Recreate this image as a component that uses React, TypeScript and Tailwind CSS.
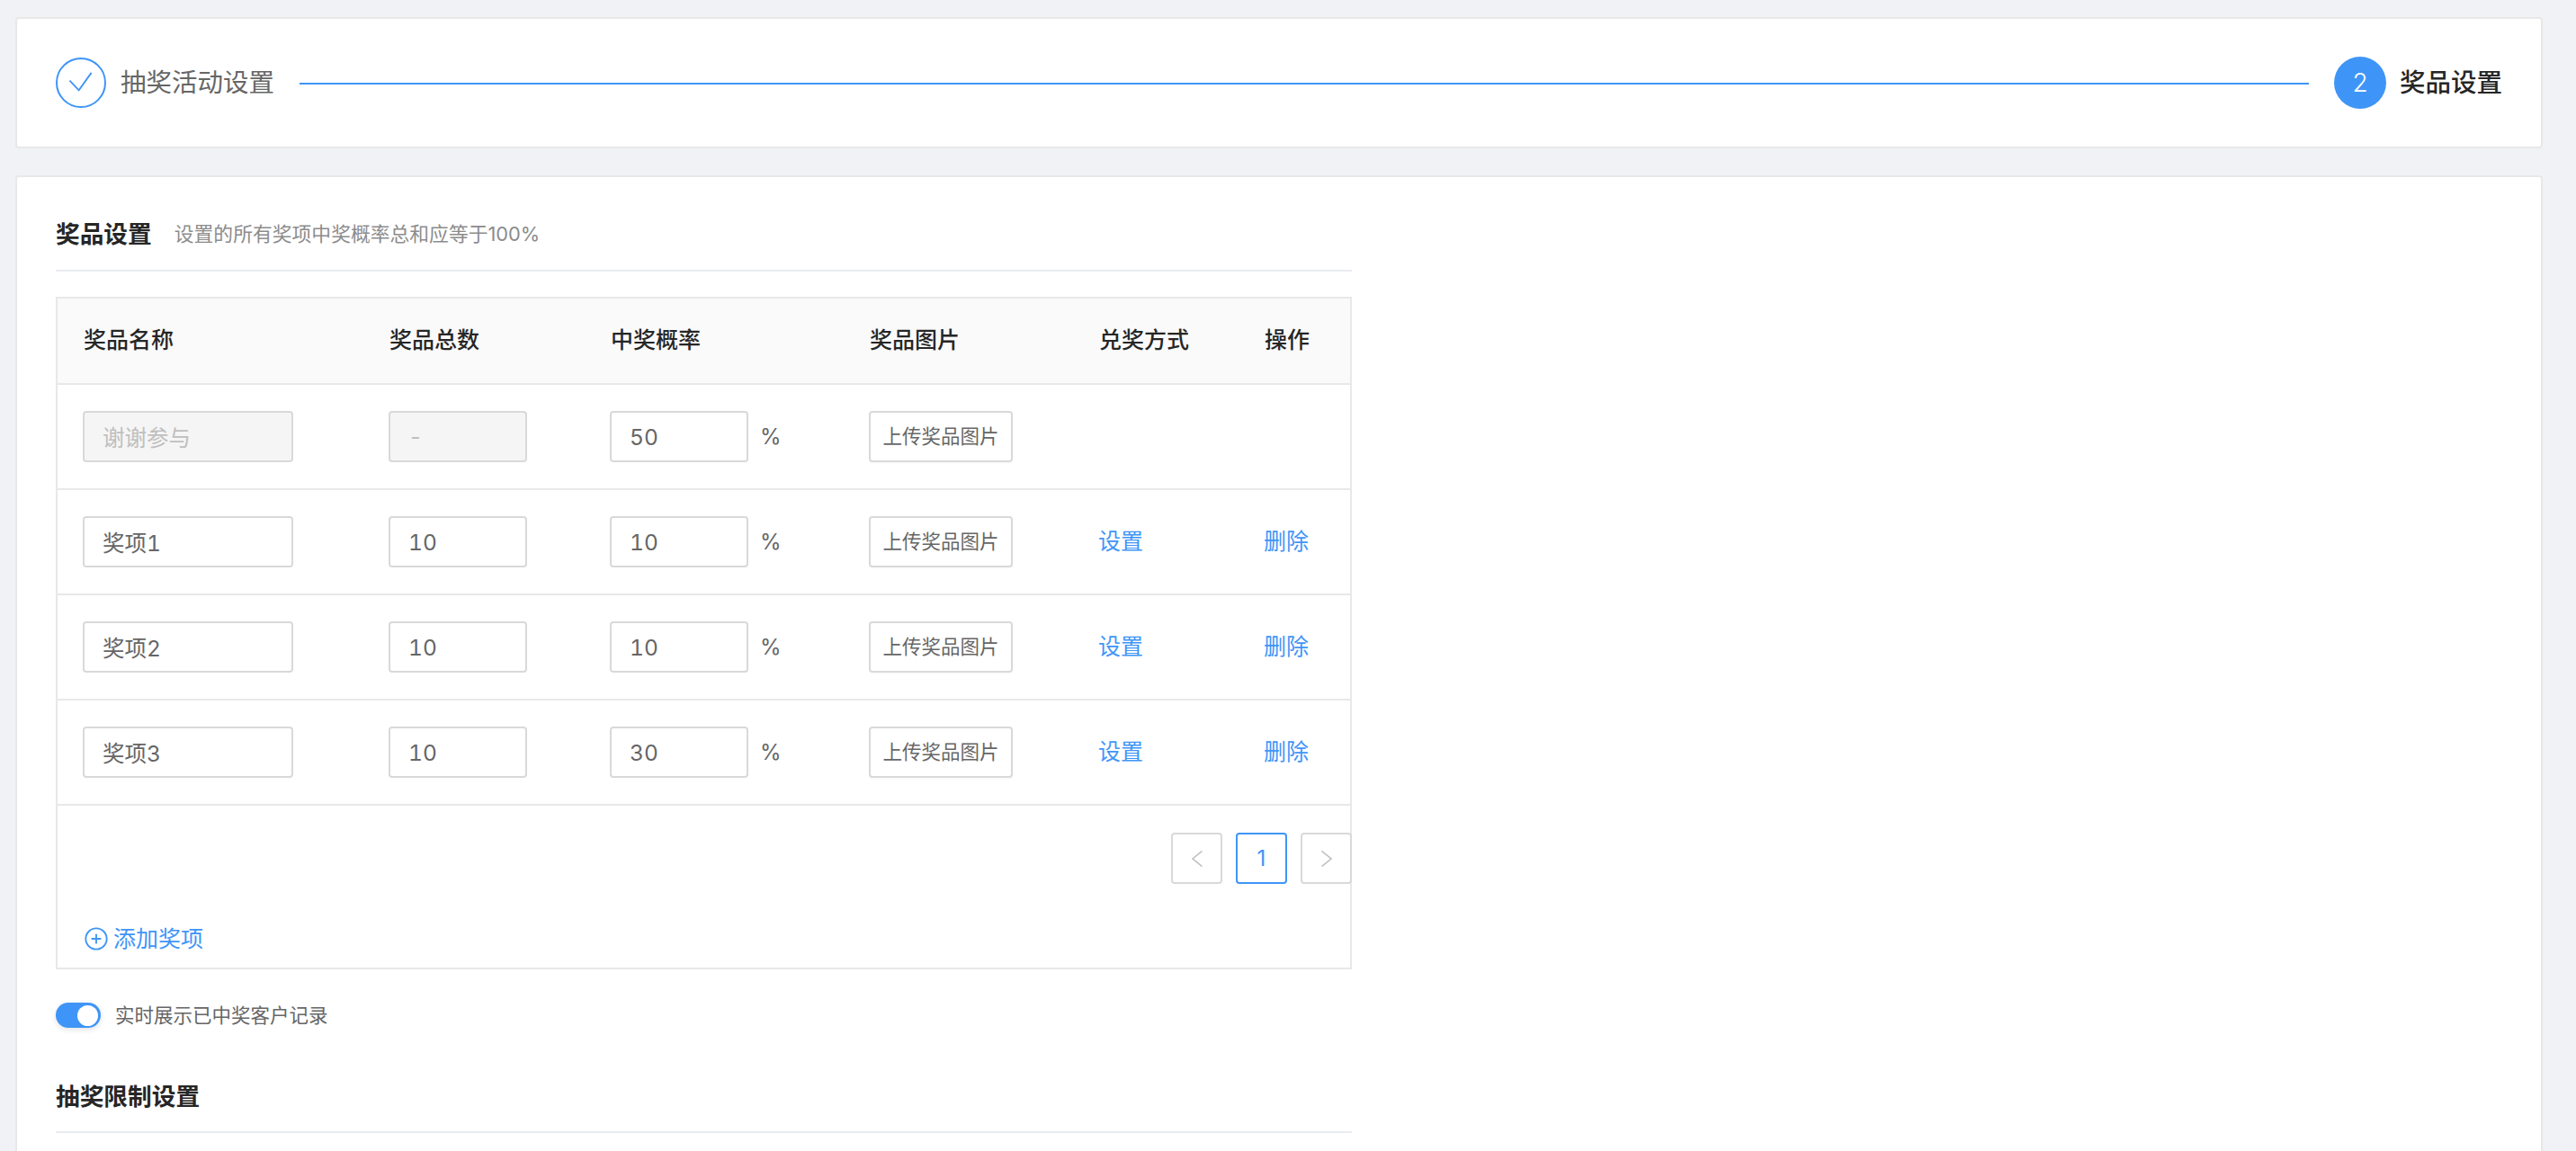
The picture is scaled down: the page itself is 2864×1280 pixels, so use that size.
import { CirclePlus } from "lucide-react";

const cols = ["w-[340px]", "w-[246px]", "w-[288px]", "w-[255px]", "w-[184px]", "flex-1"];

const rows = [
  { name: "谢谢参与", total: "-", rate: "50", locked: true },
  { name: "奖项1", total: "10", rate: "10", locked: false },
  { name: "奖项2", total: "10", rate: "10", locked: false },
  { name: "奖项3", total: "10", rate: "30", locked: false },
];

const headers = ["奖品名称", "奖品总数", "中奖概率", "奖品图片", "兑奖方式", "操作"];

function Field({ value, width, locked }: { value: string; width: string; locked?: boolean }) {
  return (
    <input
      readOnly
      value={value}
      className={`${width} h-[57px] rounded border-2 border-[#d9d9d9] px-[20px] text-[24.5px] tabular-nums outline-none ${
        locked ? "bg-[#f5f5f5] text-[#bfbfbf]" : "bg-white text-[#666666]"
      }`}
    />
  );
}

function PrizeRow({ name, total, rate, locked }: (typeof rows)[number]) {
  return (
    <div className="flex h-[117px] items-center border-b-2 border-[#e8e8e8] pl-[28px]">
      <div className={cols[0]}>
        <Field value={name} width="w-[234px]" locked={locked} />
      </div>
      <div className={cols[1]}>
        <Field value={total} width="w-[154px]" locked={locked} />
      </div>
      <div className={`${cols[2]} flex items-center`}>
        <Field value={rate} width="w-[154px]" />
        <span className="ml-[13px] text-[24px] text-[#666666]">%</span>
      </div>
      <div className={cols[3]}>
        <button className="h-[57px] w-[160px] rounded border-2 border-[#d9d9d9] bg-white text-center text-[21.5px] text-[#666666] shadow-[0_2px_0_rgba(0,0,0,0.015)]">
          上传奖品图片
        </button>
      </div>
      {!locked && (
        <>
          <a className={`${cols[4]} text-[25px] text-[#3f95f7]`}>设置</a>
          <a className={`${cols[5]} text-[25px] text-[#3f95f7]`}>删除</a>
        </>
      )}
    </div>
  );
}

function PageButton({ children, active }: { children: React.ReactNode; active?: boolean }) {
  return (
    <button
      className={`flex h-[57px] w-[57px] items-center justify-center rounded border-2 bg-white ${
        active ? "border-[#3f95f7] text-[#3f95f7]" : "border-[#d9d9d9] text-[#bfbfbf]"
      }`}
    >
      {children}
    </button>
  );
}

export default function App() {
  return (
    <div
      className="flex h-screen flex-col gap-[30px] overflow-hidden bg-[#f0f2f5] pt-[19px] pr-[37px] pl-[17px]"
      style={{ fontFamily: 'Inter, "Noto Sans CJK SC", sans-serif' }}
    >
      {/* steps */}
      <div className="flex h-[146px] shrink-0 items-center rounded border-2 border-[#e8e8e8] bg-white pr-[43px] pl-[43px]">
        <div className="flex h-[56px] w-[56px] items-center justify-center rounded-full border-2 border-[#3f95f7]">
          <svg viewBox="0 0 56 56" className="h-[56px] w-[56px]" fill="none" stroke="#3f95f7" strokeWidth="2">
            <path d="M14.5 25.5 L25.5 37 L40.5 16" />
          </svg>
        </div>
        <span className="ml-4 text-[28.5px] text-[#666666]">抽奖活动设置</span>
        <div className="mx-[28px] mt-[1px] h-[2px] flex-1 bg-[#3f95f7]" />
        <div className="flex h-[58px] w-[58px] items-center justify-center rounded-full bg-[#3f95f7] text-[28px] font-light text-white">
          2
        </div>
        <span className="ml-[15px] text-[28.5px] font-medium text-[#262626]">奖品设置</span>
      </div>

      {/* prize settings */}
      <div className="shrink-0 rounded border-2 border-[#e8e8e8] bg-white pt-[44px] pb-[200px] pl-[43px]">
        <div className="w-[1441px]">
          <div className="flex h-[61px] items-start border-b-2 border-[#e8ecf1]">
            <h2 className="text-[26.7px] leading-[38px] font-semibold text-[#262626]">奖品设置</h2>
            <span className="ml-[25px] text-[21.8px] leading-[38px] text-[#8c8c8c]">
              设置的所有奖项中奖概率总和应等于100%
            </span>
          </div>

          <div className="mt-[28px] border-r-2 border-b-2 border-l-2 border-[#e8e8e8]">
            <div className="flex h-[98px] items-center border-t-2 border-b-2 border-[#e8e8e8] bg-[#fafafa] pl-[29px]">
              {headers.map((h, i) => (
                <div key={h} className={`${cols[i]} text-[25px] font-medium text-[#262626]`}>
                  {h}
                </div>
              ))}
            </div>
            {rows.map((r) => (
              <PrizeRow key={r.name} {...r} />
            ))}
            <div className="-mr-[2px] flex justify-end gap-[15px] pt-[30px]">
              <PageButton>
                <svg viewBox="0 0 12 18" className="h-[18px] w-[12px]" fill="none" stroke="currentColor" strokeWidth="1.6">
                  <path d="M11.5 0.5 L1 9 L11.5 17.5" />
                </svg>
              </PageButton>
              <PageButton active>
                <span className="text-[24px]">1</span>
              </PageButton>
              <PageButton>
                <svg viewBox="0 0 12 18" className="h-[18px] w-[12px]" fill="none" stroke="currentColor" strokeWidth="1.6">
                  <path d="M0.5 0.5 L11 9 L0.5 17.5" />
                </svg>
              </PageButton>
            </div>
            <div className="flex h-[93px] items-end gap-[5px] pb-[18px] pl-[29px] text-[#3f95f7]">
              <CirclePlus className="h-[28px] w-[28px]" strokeWidth={1.6} />
              <span className="text-[25px] leading-[28px]">添加奖项</span>
            </div>
          </div>

          <div className="mt-[35px] flex items-center">
            <div className="flex h-[28px] w-[50px] items-center justify-end rounded-full bg-[#3f95f7] pr-[3px] shadow-[0_2px_6px_rgba(0,0,0,0.12)]">
              <div className="h-[23px] w-[23px] rounded-full bg-white" />
            </div>
            <span className="ml-[16px] text-[21.5px] text-[#666666]">实时展示已中奖客户记录</span>
          </div>

          <div className="mt-[55px] h-[60px] border-b-2 border-[#e8ecf1]">
            <h2 className="text-[26.7px] leading-[38px] font-semibold text-[#262626]">抽奖限制设置</h2>
          </div>
        </div>
      </div>
    </div>
  );
}
